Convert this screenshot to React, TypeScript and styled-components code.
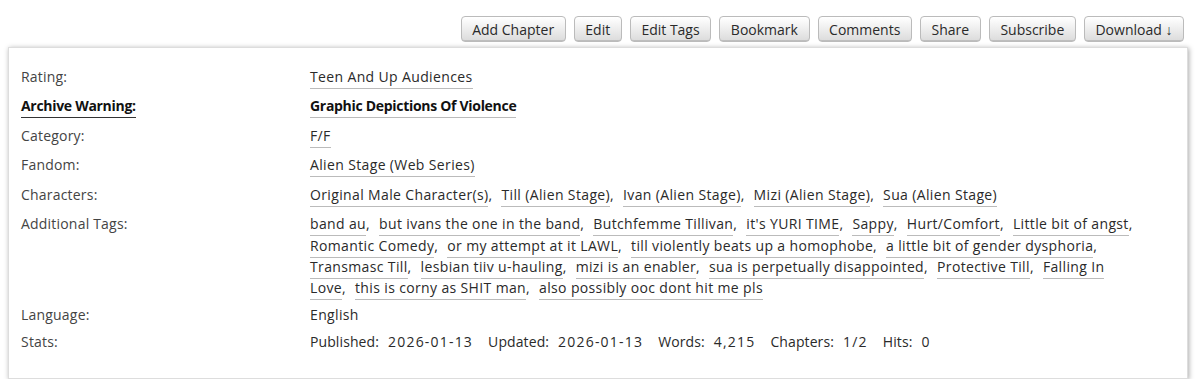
import React from "react";
import styled, { createGlobalStyle } from "styled-components";

const Global = createGlobalStyle`
  html, body { margin: 0; padding: 0; background: #fff; }
  body { font-family: "Open Sans", "Noto Sans", sans-serif; font-size: 14px; color: #2a2a2a; }
  * { box-sizing: border-box; }
`;

const Page = styled.div`
  padding: 16px 12px 0 8px;
`;

const Actions = styled.ul`
  list-style: none;
  margin: 0 4px 0 0;
  padding: 0;
  display: flex;
  justify-content: flex-end;
  gap: 8px;
`;

const Button = styled.li`
  height: 26px;
  padding: 0 10.6px;
  display: flex;
  align-items: center;
  font-size: 14px;
  color: #2a2a2a;
  border: 1px solid #bbb;
  border-radius: 4px;
  background: linear-gradient(#fff 2%, #ddd 95%, #bbb 100%);
  box-shadow: inset 0 -1px 0 rgba(0, 0, 0, 0.05);
  white-space: nowrap;
`;

const Wrapper = styled.div`
  margin-top: 5px;
  border: 1px solid #ddd;
  box-shadow: 1px 1px 5px #aaa;
  padding: 18px 12px 20px 12px;
  display: grid;
  grid-template-columns: 289px 828px;
  align-items: start;
  letter-spacing: 0.36px;
`;

const Label = styled.dt<{ $strong?: boolean; $pad?: number }>`
  margin: 0;
  line-height: 21px;
  color: ${(p) => (p.$strong ? "#111" : "#444")};
  font-weight: ${(p) => (p.$strong ? 700 : 400)};
  letter-spacing: ${(p) => (p.$strong ? "-0.3px" : "0.2px")};
  padding-bottom: ${(p) => p.$pad ?? 8.2}px;
  span {
    border-bottom: ${(p) => (p.$strong ? "1px solid #333" : "none")};
    padding-bottom: 2px;
  }
`;

const Value = styled.dd<{ $pad?: number }>`
  margin: 0;
  line-height: 21.3px;
  padding-bottom: ${(p) => p.$pad ?? 8.2}px;
`;

const TagList = styled.ul<{ $strong?: boolean }>`
  list-style: none;
  margin: 0;
  padding: 0;
  display: inline;
  font-weight: ${(p) => (p.$strong ? 700 : 400)};
  letter-spacing: ${(p) => (p.$strong ? "-0.3px" : "inherit")};
  color: ${(p) => (p.$strong ? "#111" : "#2a2a2a")};
`;

const TagItem = styled.li<{ $last?: boolean }>`
  display: inline;
  margin-right: ${(p) => (p.$last ? 0 : 5)}px;
`;

const TagLink = styled.a`
  color: inherit;
  text-decoration: none;
  border-bottom: 1px solid #bbb;
  padding-bottom: 2px;
`;

const Stats = styled.dl`
  margin: 0;
  display: inline;
  dt, dd { display: inline; margin: 0; }
  dt { margin-right: 9px; letter-spacing: 0.1px; }
  dd { margin-right: 15px; letter-spacing: 1.2px; }
`;

type Row = { label: string; tags: string[]; strong?: boolean; pad?: number };

const rows: Row[] = [
  { label: "Rating:", tags: ["Teen And Up Audiences"] },
  { label: "Archive Warning:", tags: ["Graphic Depictions Of Violence"], strong: true },
  { label: "Category:", tags: ["F/F"] },
  { label: "Fandom:", tags: ["Alien Stage (Web Series)"] },
  {
    label: "Characters:",
    tags: [
      "Original Male Character(s)",
      "Till (Alien Stage)",
      "Ivan (Alien Stage)",
      "Mizi (Alien Stage)",
      "Sua (Alien Stage)",
    ],
  },
  {
    label: "Additional Tags:",
    pad: 5,
    tags: [
      "band au",
      "but ivans the one in the band",
      "Butchfemme Tillivan",
      "it's YURI TIME",
      "Sappy",
      "Hurt/Comfort",
      "Little bit of angst",
      "Romantic Comedy",
      "or my attempt at it LAWL",
      "till violently beats up a homophobe",
      "a little bit of gender dysphoria",
      "Transmasc Till",
      "lesbian tiiv u-hauling",
      "mizi is an enabler",
      "sua is perpetually disappointed",
      "Protective Till",
      "Falling In Love",
      "this is corny as SHIT man",
      "also possibly ooc dont hit me pls",
    ],
  },
];

export default function App() {
  return (
    <>
      <Global />
      <Page>
        <Actions>
          {["Add Chapter", "Edit", "Edit Tags", "Bookmark", "Comments", "Share", "Subscribe", "Download ↓"].map(
            (b) => (
              <Button key={b}>{b}</Button>
            )
          )}
        </Actions>
        <Wrapper>
          {rows.map((r) => (
            <React.Fragment key={r.label}>
              <Label $strong={r.strong} $pad={r.pad}>
                <span>{r.label}</span>
              </Label>
              <Value $pad={r.pad}>
                <TagList $strong={r.strong}>
                  {r.tags.map((t, i) => (
                    <TagItem key={t} $last={i === r.tags.length - 1}>
                      <TagLink href="#">{t}</TagLink>
                      {i < r.tags.length - 1 ? ", " : ""}
                    </TagItem>
                  ))}
                </TagList>
              </Value>
            </React.Fragment>
          ))}
          <Label $pad={6}>Language:</Label>
          <Value $pad={6}>English</Value>
          <Label $pad={6}>Stats:</Label>
          <Value $pad={6}>
            <Stats>
              <dt>Published:</dt>
              <dd>2026-01-13</dd>
              <dt>Updated:</dt>
              <dd>2026-01-13</dd>
              <dt>Words:</dt>
              <dd>4,215</dd>
              <dt>Chapters:</dt>
              <dd>1/2</dd>
              <dt>Hits:</dt>
              <dd>0</dd>
            </Stats>
          </Value>
        </Wrapper>
      </Page>
    </>
  );
}
